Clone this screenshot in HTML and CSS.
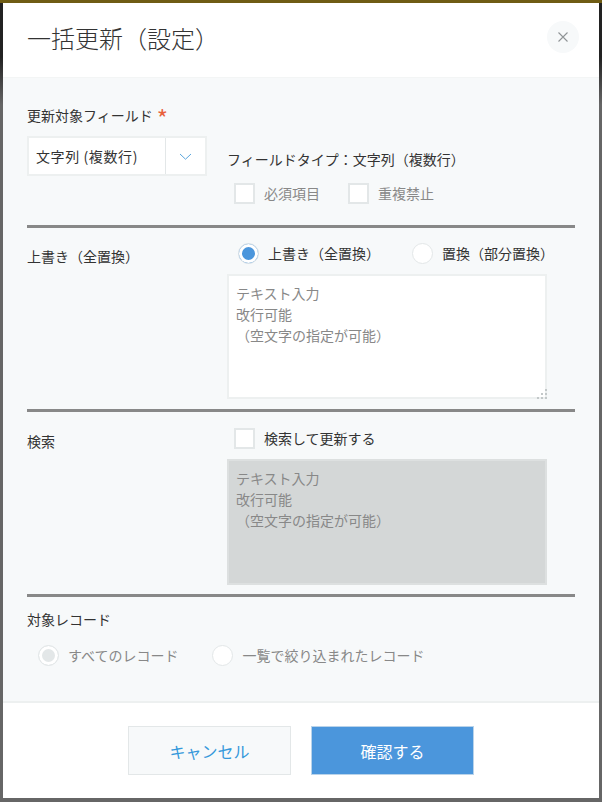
FILE: index.html

```html
<!DOCTYPE html>
<html lang="ja">
<head>
  <meta charset="UTF-8">
  <title>一括更新（設定）</title>
  <link rel="stylesheet" href="styles.css">
</head>
<body>
  <div class="dialog">
    <div class="dialog-header">
      <h1>一括更新（設定）</h1>
      <button class="close-btn" type="button" aria-label="閉じる">
        <svg width="12" height="12" viewBox="0 0 12 12"><path d="M1.5 1.5l9 9M10.5 1.5l-9 9" stroke="#8f9496" stroke-width="1.1" fill="none"/></svg>
      </button>
    </div>

    <div class="dialog-body">
      <section class="row row-field">
        <div class="col-left">
          <div class="field-label">更新対象フィールド <span class="required">*</span></div>
          <div class="select">
            <span class="select-value">文字列 (複数行)</span>
            <span class="select-arrow">
              <svg width="13" height="7" viewBox="0 0 13 7"><path d="M1 1l5.5 5.2L12 1" stroke="#5ba6dd" stroke-width="1" fill="none"/></svg>
            </span>
          </div>
        </div>
        <div class="col-right">
          <div class="type-text">フィールドタイプ：文字列（複数行）</div>
          <div class="options options-check">
            <label class="option muted"><input type="checkbox" class="check" disabled>必須項目</label>
            <label class="option muted"><input type="checkbox" class="check" disabled>重複禁止</label>
          </div>
        </div>
      </section>

      <section class="row row-replace">
        <div class="col-left row-title">上書き（全置換）</div>
        <div class="col-right">
          <div class="options options-radio">
            <label class="option"><input type="radio" class="radio" name="mode" checked>上書き（全置換）</label>
            <label class="option"><input type="radio" class="radio" name="mode">置換（部分置換）</label>
          </div>
          <div class="box-wrap">
            <textarea class="text-box">テキスト入力
改行可能
（空文字の指定が可能）</textarea>
            <svg class="grip" width="10" height="10" viewBox="0 0 10 10" fill="#c3c8c9"><rect x="8" y="0" width="2" height="2"/><rect x="4" y="4" width="2" height="2"/><rect x="8" y="4" width="2" height="2"/><rect x="0" y="8" width="2" height="2"/><rect x="4" y="8" width="2" height="2"/><rect x="8" y="8" width="2" height="2"/></svg>
          </div>
        </div>
      </section>

      <section class="row row-search">
        <div class="col-left row-title">検索</div>
        <div class="col-right">
          <div class="options options-check">
            <label class="option"><input type="checkbox" class="check">検索して更新する</label>
          </div>
          <textarea class="text-box off" disabled>テキスト入力
改行可能
（空文字の指定が可能）</textarea>
        </div>
      </section>

      <section class="row-target">
        <div class="field-label">対象レコード</div>
        <div class="target-options">
          <label class="option muted"><input type="radio" class="radio" name="target" checked disabled>すべてのレコード</label>
          <label class="option muted"><input type="radio" class="radio" name="target" disabled>一覧で絞り込まれたレコード</label>
        </div>
      </section>
    </div>

    <div class="dialog-footer">
      <button class="btn btn-cancel" type="button">キャンセル</button>
      <button class="btn btn-ok" type="button">確認する</button>
    </div>
  </div>
</body>
</html>
```

FILE: styles.css

```css
html, body {
  height: 100%;
}
body {
  margin: 0;
  overflow: hidden;
  font-family: "Noto Sans CJK JP", "Noto Sans", sans-serif;
  font-size: 14px;
  color: #333;
  background: linear-gradient(#6f5c14 0, #6f5c14 3px, #222 3px, #222 57px, #666 105px, #666 100%);
}
.dialog {
  width: 596px;
  height: 795px;
  margin: 3px 3px 0;
  display: flex;
  flex-direction: column;
  background: #fff;
}

/* header */
.dialog-header {
  height: 75px;
  box-sizing: border-box;
  padding: 0 20px 6px 24px;
  display: flex;
  align-items: center;
  justify-content: space-between;
  border-bottom: 1px solid #f3f5f5;
}
.dialog-header h1 {
  margin: 0;
  font-size: 24px;
  font-weight: 300;
  color: #333;
}
.close-btn {
  width: 32px;
  height: 32px;
  padding: 0;
  border: none;
  border-radius: 50%;
  background: #f7f9fa;
  display: flex;
  align-items: center;
  justify-content: center;
}

/* body */
.dialog-body {
  flex: 1;
  padding: 0 24px;
  background: #f7f9fa;
}
.row {
  display: flex;
  border-bottom: 3px solid #888;
}
.col-left {
  width: 200px;
  flex-shrink: 0;
}
.col-right {
  flex: 1;
}
.row-field {
  height: 150px;
  padding-top: 27px;
  box-sizing: border-box;
}
.row-replace {
  height: 184px;
  box-sizing: border-box;
  padding-top: 14px;
}
.row-search {
  height: 185px;
  box-sizing: border-box;
  padding-top: 15px;
}
.field-label {
  line-height: 20px;
}
.required {
  display: inline-block;
  margin-left: 1px;
  color: #e8603c;
  font-size: 24px;
  line-height: 14px;
  vertical-align: -7px;
}
.row-title {
  line-height: 20px;
  padding-top: 4px;
}
.select {
  width: 180px;
  height: 40px;
  margin-top: 11px;
  box-sizing: border-box;
  border: 2px solid #edf0f0;
  background: #fff;
  display: flex;
  align-items: center;
}
.select-value {
  flex: 1;
  padding-left: 7px;
  color: #333;
  letter-spacing: 0.6px;
}
.select-arrow {
  width: 39px;
  height: 36px;
  border-left: 1px solid #e3e7e8;
  display: flex;
  align-items: center;
  justify-content: center;
}
.type-text {
  margin-top: 44px;
  line-height: 20px;
}
.options {
  display: flex;
}
.options-check {
  padding-left: 7px;
  gap: 28px;
}
.row-field .options-check {
  margin-top: 13px;
}
.options-radio {
  padding-left: 11px;
  gap: 32px;
}
.option {
  display: flex;
  align-items: center;
  gap: 9px;
  font-size: 14px;
  line-height: 22px;
  color: #333;
}
.option.muted {
  color: #888;
}
.check,
.radio {
  appearance: none;
  margin: 0;
  width: 21px;
  height: 21px;
  box-sizing: border-box;
  background: #fff;
  border: 2px solid #e3e7e8;
  flex-shrink: 0;
}
.radio {
  border-radius: 50%;
  border-width: 1px;
}
.radio:checked {
  background: #4b96dc;
  box-shadow: inset 0 0 0 3px #fff;
}
.radio:checked:disabled {
  background: #e3e7e8;
}
.box-wrap {
  position: relative;
  width: 320px;
}
.grip {
  position: absolute;
  right: 0;
  bottom: 0;
}
.text-box {
  display: block;
  width: 320px;
  height: 125px;
  box-sizing: border-box;
  margin-top: 10px;
  padding: 7px;
  border: 2px solid #edf0f0;
  border-radius: 0;
  background: #fff;
  color: #888;
  font-family: inherit;
  font-size: 14px;
  line-height: 21px;
  resize: none;
  outline: none;
}
.text-box.off {
  height: 126px;
  background: #d4d7d7;
  border-color: #dde0e0;
}
.row-target {
  padding-top: 12px;
}
.target-options {
  display: flex;
  gap: 34px;
  padding: 15px 0 0 11px;
}

/* footer */
.dialog-footer {
  height: 97px;
  box-sizing: border-box;
  border-top: 2px solid #edf0f0;
  padding-top: 23px;
  display: flex;
  justify-content: center;
  gap: 20px;
  background: #fff;
}
.btn {
  width: 163px;
  height: 49px;
  box-sizing: border-box;
  font-family: inherit;
  font-size: 16px;
  cursor: pointer;
}
.btn-cancel {
  background: #f7f9fa;
  border: 1px solid #e3e7e8;
  color: #3498db;
}
.btn-ok {
  background: #4b96dc;
  border: 1px solid #b9d3ea;
  color: #fff;
}
```
